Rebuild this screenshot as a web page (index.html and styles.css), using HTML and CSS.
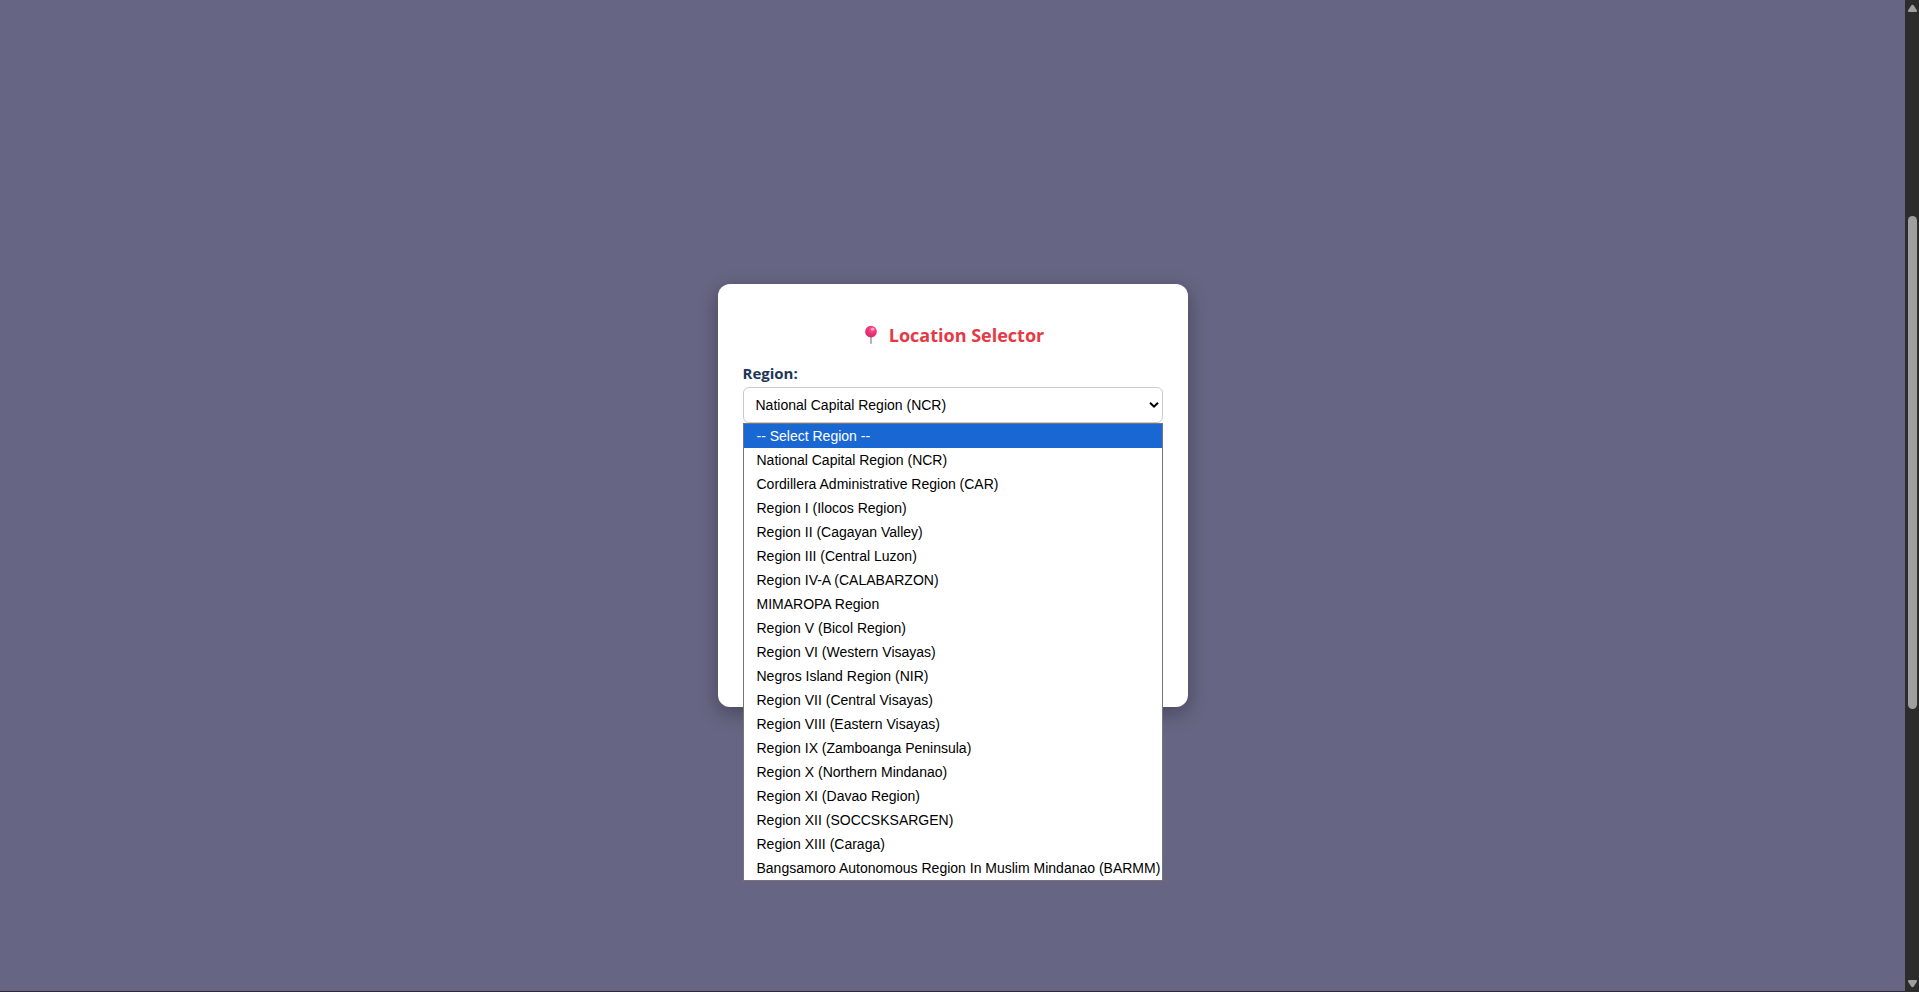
FILE: index.html
```html
<!DOCTYPE html>
<html lang="en">
<head>
<meta charset="utf-8">
<meta name="viewport" content="width=device-width, initial-scale=1">
<title>Location Selector</title>
<link rel="stylesheet" href="styles.css">
</head>
<body>
<div class="window">
  <main class="page">
    <section class="card">
      <h1 class="title">
        <svg class="pin" viewBox="0 0 24 24" aria-hidden="true">
          <defs>
            <radialGradient id="ball" cx="0.6" cy="0.3" r="0.7">
              <stop offset="0" stop-color="#ff5a92"/>
              <stop offset="0.45" stop-color="#f8357c"/>
              <stop offset="1" stop-color="#ce2a68"/>
            </radialGradient>
          </defs>
          <rect x="11" y="12" width="2" height="11" rx="1" fill="#aaa0b8"/>
          <circle cx="12" cy="8" r="7" fill="url(#ball)"/>
          <ellipse cx="14" cy="5" rx="2" ry="1.6" fill="#ffb0c8"/>
        </svg>
        <span>Location Selector</span>
      </h1>
      <div class="field">
        <label class="label" for="region">Region:</label>
        <div class="control">
          <select class="select" id="region">
            <option>National Capital Region (NCR)</option>
          </select>
          <svg class="chevron" viewBox="0 0 10 8" aria-hidden="true"><path d="M1 1.7 5 5.7 9 1.7" fill="none" stroke="#000" stroke-width="2"/></svg>
          <ul class="menu" role="listbox" aria-label="Region">
            <li class="item item-active" role="option" aria-selected="true">-- Select Region --</li>
            <li class="item" role="option">National Capital Region (NCR)</li>
            <li class="item" role="option">Cordillera Administrative Region (CAR)</li>
            <li class="item" role="option">Region I (Ilocos Region)</li>
            <li class="item" role="option">Region II (Cagayan Valley)</li>
            <li class="item" role="option">Region III (Central Luzon)</li>
            <li class="item" role="option">Region IV-A (CALABARZON)</li>
            <li class="item" role="option">MIMAROPA Region</li>
            <li class="item" role="option">Region V (Bicol Region)</li>
            <li class="item" role="option">Region VI (Western Visayas)</li>
            <li class="item" role="option">Negros Island Region (NIR)</li>
            <li class="item" role="option">Region VII (Central Visayas)</li>
            <li class="item" role="option">Region VIII (Eastern Visayas)</li>
            <li class="item" role="option">Region IX (Zamboanga Peninsula)</li>
            <li class="item" role="option">Region X (Northern Mindanao)</li>
            <li class="item" role="option">Region XI (Davao Region)</li>
            <li class="item" role="option">Region XII (SOCCSKSARGEN)</li>
            <li class="item" role="option">Region XIII (Caraga)</li>
            <li class="item" role="option">Bangsamoro Autonomous Region In Muslim Mindanao (BARMM)</li>
          </ul>
        </div>
      </div>
    </section>
  </main>
  <div class="scrollbar" aria-hidden="true">
    <svg class="arrow" viewBox="0 0 14 16"><path d="M6.2 5.5Q7.5 4.2 8.8 5.5L12 10.5Q12.2 12 11 12H4Q2.8 12 3 10.5Z" fill="#9f9f9f"/></svg>
    <div class="track">
      <div class="thumb"></div>
    </div>
    <svg class="arrow" viewBox="0 0 14 16"><path d="M6.2 11.5Q7.5 12.8 8.8 11.5L12 6.5Q12.2 5 11 5H4Q2.8 5 3 6.5Z" fill="#9f9f9f"/></svg>
  </div>
</div>
</body>
</html>
```
FILE: styles.css
```css
* {
  box-sizing: border-box;
}

body {
  margin: 0;
  font-family: "Open Sans", "Noto Sans", sans-serif;
}

.window {
  display: flex;
  min-height: 100vh;
  border-bottom: 1px solid #2c2c2c;
}

.page {
  flex: 1;
  display: flex;
  align-items: center;
  justify-content: center;
  background: #666583;
}

.card {
  width: 100%;
  max-width: 470px;
  min-height: 423px;
  padding: 36px 25px 25px;
  border-radius: 12px;
  background: #fff;
  box-shadow: 0 6px 20px rgba(0, 0, 0, 0.3);
}

.title {
  display: flex;
  align-items: center;
  justify-content: center;
  gap: 8px;
  margin: 0 0 12px;
  font-size: 18px;
  line-height: 30px;
  font-weight: 700;
  color: #e63946;
}

.pin {
  width: 20px;
  height: 20px;
}

.field {
  display: flex;
  flex-direction: column;
  gap: 2px;
}

.label {
  font-size: 15px;
  line-height: 23px;
  font-weight: 700;
  color: #1d3557;
}

.control {
  position: relative;
}

.select {
  display: block;
  width: 100%;
  height: 36px;
  padding: 0 12px;
  border: 1px solid #ccc;
  border-radius: 6px;
  background: #fff;
  appearance: none;
  font-family: "Liberation Sans", Arial, sans-serif;
  font-size: 14px;
  color: #000;
}

.chevron {
  position: absolute;
  top: 14px;
  right: 4px;
  width: 10px;
  height: 8px;
  pointer-events: none;
}

.menu {
  position: absolute;
  top: 100%;
  left: 0;
  right: 0;
  margin: 0;
  padding: 0;
  border: 1px solid #767676;
  background: #fff;
  list-style: none;
  font-family: "Liberation Sans", Arial, sans-serif;
  font-size: 14px;
  line-height: 24px;
  color: #000;
}

.item {
  padding-left: 13px;
  white-space: nowrap;
}

.item-active {
  background: #1967d2;
  color: #fff;
}

.scrollbar {
  display: flex;
  flex-direction: column;
  width: 14px;
  background: #2c2c2c;
}

.arrow {
  width: 14px;
  height: 16px;
}

.track {
  flex: 1;
  display: grid;
  grid-template-rows: 200fr 493fr 266fr;
  padding: 0 2px 0 3px;
}

.thumb {
  grid-row: 2;
  border-radius: 5px;
  background: #9f9f9f;
}
```
